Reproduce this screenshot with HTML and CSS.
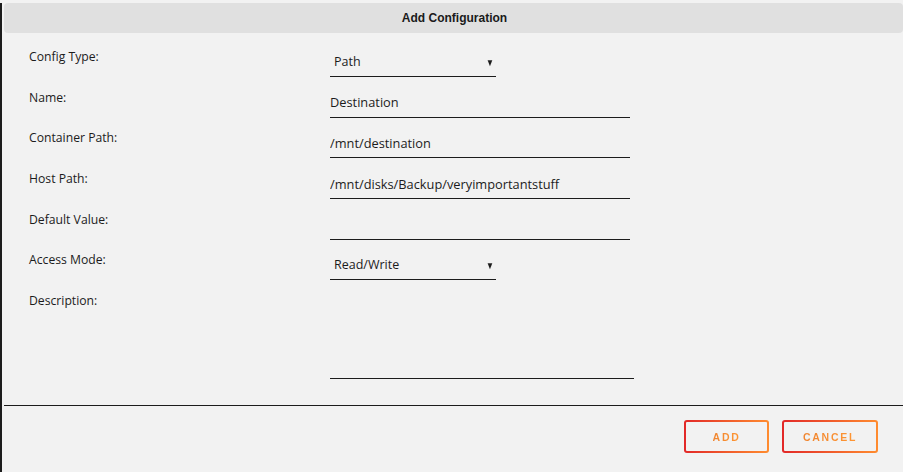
FILE: index.html
```html
<!DOCTYPE html>
<html lang="en">
<head>
    <meta charset="UTF-8">
    <title>Add Configuration</title>
    <link rel="stylesheet" href="styles.css">
</head>
<body>
    <div class="dialog">
        <div class="title-bar">Add Configuration</div>

        <form class="config-form">
            <div class="row">
                <label>Config Type:</label>
                <div class="select-wrap">
                    <select class="field select">
                        <option>Path</option>
                    </select>
                    <span class="arrow">&#9660;</span>
                </div>
            </div>
            <div class="row">
                <label>Name:</label>
                <input class="field" type="text" value="Destination">
            </div>
            <div class="row">
                <label>Container Path:</label>
                <input class="field" type="text" value="/mnt/destination">
            </div>
            <div class="row">
                <label>Host Path:</label>
                <input class="field" type="text" value="/mnt/disks/Backup/veryimportantstuff">
            </div>
            <div class="row">
                <label>Default Value:</label>
                <input class="field" type="text" value="">
            </div>
            <div class="row">
                <label>Access Mode:</label>
                <div class="select-wrap">
                    <select class="field select">
                        <option>Read/Write</option>
                    </select>
                    <span class="arrow">&#9660;</span>
                </div>
            </div>
            <div class="row row-tall">
                <label>Description:</label>
                <textarea class="field area"></textarea>
            </div>
        </form>

        <div class="footer">
            <button class="btn"><span>ADD</span></button>
            <button class="btn"><span>CANCEL</span></button>
        </div>
    </div>
</body>
</html>
```

FILE: styles.css
```css
html, body {
    margin: 0;
    height: 100%;
}

body {
    font-family: "Open Sans", "Noto Sans", sans-serif;
    font-size: 12.2px;
    color: #1c1c1c;
    background-color: #f2f2f2;
    overflow: hidden;
}

.dialog {
    height: 472px;
    border-left: 2px solid #1c1c1c;
    box-sizing: border-box;
}

.title-bar {
    margin: 3px 0 0 2px;
    height: 30px;
    line-height: 30px;
    background-color: #e0e0e0;
    border-radius: 4px;
    text-align: center;
    font-family: "Liberation Sans", Arial, sans-serif;
    font-weight: bold;
    font-size: 12px;
    color: #1a1a1a;
    padding-left: 2px;
}

.config-form {
    padding: 16px 0 0 27px;
}

.row {
    display: flex;
    align-items: flex-start;
    height: 40.7px;
}

.row label {
    width: 301px;
    flex: none;
    line-height: 16px;
}

.field {
    margin-top: 2px;
    height: 26px;
    width: 300px;
    box-sizing: border-box;
    padding: 0 0 4px 0;
    border: none;
    border-bottom: 1px solid #1c1c1c;
    background: transparent;
    font-family: inherit;
    font-size: 12.8px;
    color: #1c1c1c;
    outline: none;
}

.select-wrap {
    position: relative;
    margin-top: 2px;
}

.select {
    margin-top: 0;
    width: 166px;
    padding-left: 4px;
    appearance: none;
    -webkit-appearance: none;
    font-size: 12.5px;
}

.arrow {
    position: absolute;
    right: 1px;
    top: 4px;
    font-size: 10px;
    transform: scaleX(0.8);
    color: #1c1c1c;
}

.row-tall {
    height: 111px;
}

.area {
    width: 304px;
    height: 84px;
    resize: none;
}

.footer {
    margin: 1px 0 0 2px;
    border-top: 1px solid #1c1c1c;
    padding: 14px 25px 0 0;
    display: flex;
    justify-content: flex-end;
    gap: 13px;
}

.btn {
    height: 33px;
    min-width: 85px;
    padding: 0 19px;
    border: 2px solid transparent;
    border-radius: 3px;
    background:
        linear-gradient(#f2f2f2, #f2f2f2) padding-box,
        linear-gradient(90deg, #e22828, #ff8c2f) border-box;
    font-family: "Liberation Sans", Arial, sans-serif;
    font-weight: bold;
    font-size: 10.5px;
    letter-spacing: 1.7px;
    cursor: pointer;
}

.btn span {
    background: linear-gradient(90deg, #f08530, #ff9633);
    -webkit-background-clip: text;
    background-clip: text;
    color: transparent;
}
```
